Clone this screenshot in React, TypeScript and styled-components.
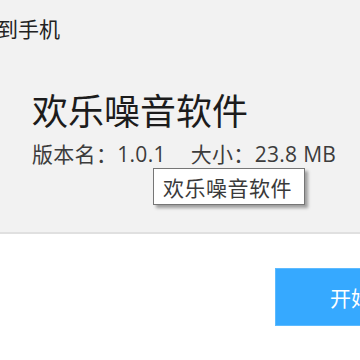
import styled, { createGlobalStyle } from 'styled-components';

const GlobalStyle = createGlobalStyle`
  html, body {
    margin: 0;
    padding: 0;
    background: #ffffff;
  }
  body {
    font-family: "Open Sans", "Noto Sans CJK SC", sans-serif;
  }
`;

const Page = styled.div`
  position: relative;
  width: 360px;
  height: 360px;
  overflow: hidden;
  background: #ffffff;
`;

const Header = styled.section`
  height: 232px;
  background: #f2f2f2;
  border-bottom: 2px solid #e0e0e0;
`;

const TopLink = styled.div`
  margin-left: -3px;
  padding-top: 17px;
  font-size: 21px;
  line-height: 24px;
  color: #222;
`;

const Info = styled.div`
  padding: 51px 0 0 32px;
  display: flex;
  flex-direction: column;
  gap: 10px;
`;

const Title = styled.h1`
  margin: 0;
  font-size: 36px;
  font-weight: 400;
  line-height: 40px;
  color: #1c1c1c;
`;

const Meta = styled.div`
  display: flex;
  gap: 25px;
  font-size: 21px;
  line-height: 24px;
  letter-spacing: 0.3px;
  color: #3c3c3c;
`;

const Tooltip = styled.div`
  position: absolute;
  left: 153px;
  top: 168px;
  width: 152px;
  height: 37px;
  box-sizing: border-box;
  padding-left: 9px;
  display: flex;
  align-items: center;
  background: #ffffff;
  border: 1px solid #767676;
  box-shadow: 3px 3px 3px rgba(0, 0, 0, 0.35);
  font-size: 21px;
  letter-spacing: 0.5px;
  color: #3a3a3a;
`;

const Footer = styled.div`
  display: flex;
  padding: 34px 0 0 275px;
`;

const PrimaryButton = styled.button`
  flex-shrink: 0;
  width: 194px;
  height: 58px;
  border: 1px solid #5cbaff;
  background: #36a9ff;
  color: #ffffff;
  font-family: "Noto Sans CJK SC", sans-serif;
  font-size: 21px;
  padding: 0;
`;

export default function App() {
  return (
    <Page>
      <GlobalStyle />
      <Header>
        <TopLink>到手机</TopLink>
        <Info>
          <Title>欢乐噪音软件</Title>
          <Meta>
            <span>版本名：1.0.1</span>
            <span>大小：23.8 MB</span>
          </Meta>
        </Info>
      </Header>
      <Footer>
        <PrimaryButton>开始安装</PrimaryButton>
      </Footer>
      <Tooltip>欢乐噪音软件</Tooltip>
    </Page>
  );
}
